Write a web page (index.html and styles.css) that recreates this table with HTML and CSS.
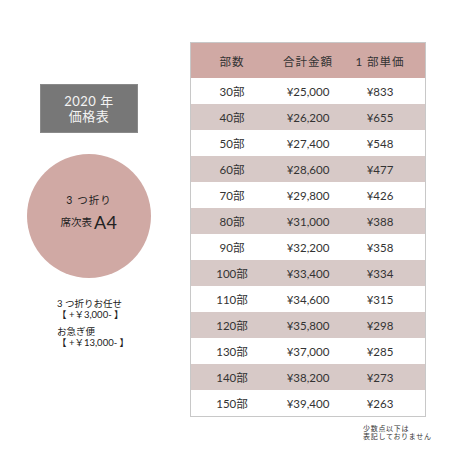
FILE: index.html
```html
<!DOCTYPE html>
<html lang="ja">
<head>
<meta charset="utf-8">
<link rel="stylesheet" href="styles.css">
</head>
<body>
<div class="page">
  <div class="left">
    <div class="yearbox">
      <div>2020 年</div>
      <div>価格表</div>
    </div>
    <div class="circle">
      <div class="c1">3 つ折り</div>
      <div class="c2">席次表 <span class="a4">A4</span></div>
    </div>
    <div class="notes">
      <div class="group">
        <div>3 つ折りお任せ</div>
        <div>【 +￥3,000- 】</div>
      </div>
      <div class="group">
        <div>お急ぎ便</div>
        <div>【 +￥13,000- 】</div>
      </div>
    </div>
  </div>
  <div class="right">
    <div class="table">
      <div class="row head"><span>部数</span><span>合計金額</span><span>1 部単価</span></div>
      <div class="row"><span>30部</span><span>¥25,000</span><span>¥833</span></div>
      <div class="row alt"><span>40部</span><span>¥26,200</span><span>¥655</span></div>
      <div class="row"><span>50部</span><span>¥27,400</span><span>¥548</span></div>
      <div class="row alt"><span>60部</span><span>¥28,600</span><span>¥477</span></div>
      <div class="row"><span>70部</span><span>¥29,800</span><span>¥426</span></div>
      <div class="row alt"><span>80部</span><span>¥31,000</span><span>¥388</span></div>
      <div class="row"><span>90部</span><span>¥32,200</span><span>¥358</span></div>
      <div class="row alt"><span>100部</span><span>¥33,400</span><span>¥334</span></div>
      <div class="row"><span>110部</span><span>¥34,600</span><span>¥315</span></div>
      <div class="row alt"><span>120部</span><span>¥35,800</span><span>¥298</span></div>
      <div class="row"><span>130部</span><span>¥37,000</span><span>¥285</span></div>
      <div class="row alt"><span>140部</span><span>¥38,200</span><span>¥273</span></div>
      <div class="row"><span>150部</span><span>¥39,400</span><span>¥263</span></div>
    </div>
    <div class="foot">
      <div>少数点以下は</div>
      <div>表記しておりません</div>
    </div>
  </div>
</div>
</body>
</html>
```

FILE: styles.css
```css
* { box-sizing: border-box; }
html, body {
  margin: 0;
  padding: 0;
  background: #ffffff;
}
body {
  width: 460px;
  height: 460px;
  overflow: hidden;
  font-family: "Lato", "Noto Sans CJK JP", sans-serif;
  color: #333;
}
.page {
  display: flex;
  width: 460px;
  height: 460px;
}
.left {
  width: 190px;
  padding-top: 84px;
  display: flex;
  flex-direction: column;
}
.yearbox {
  margin-left: 40px;
  width: 98px;
  height: 49px;
  background: #777777;
  border: 1px solid #8a8a8a;
  color: #f4f4f4;
  font-size: 13px;
  line-height: 15px;
  letter-spacing: 0.5px;
  display: flex;
  flex-direction: column;
  align-items: center;
  justify-content: center;
}
.circle {
  margin-top: 21px;
  margin-left: 27px;
  width: 124px;
  height: 124px;
  border-radius: 50%;
  background: #d0a9a4;
  display: flex;
  flex-direction: column;
  align-items: center;
  justify-content: center;
  color: #222;
  padding-bottom: 8px;
}
.c1 {
  font-size: 10.5px;
  letter-spacing: 1px;
  line-height: 14px;
}
.c2 {
  margin-top: 6px;
  font-size: 10.5px;
  line-height: 18px;
  display: flex;
  align-items: center;
  gap: 2px;
}
.a4 {
  font-size: 18px;
  letter-spacing: 0.5px;
  font-weight: 400;
}
.notes {
  margin-top: 21px;
  margin-left: 57px;
  font-size: 9.5px;
  line-height: 10.5px;
  color: #222;
}
.group + .group {
  margin-top: 7px;
}
.right {
  padding-top: 42px;
  display: flex;
  flex-direction: column;
}
.table {
  width: 236px;
  border: 1px solid #c8c8c8;
}
.row {
  display: grid;
  grid-template-columns: 82px 70px 74px;
  height: 26px;
  align-items: center;
  font-size: 11.5px;
  color: #333;
}
.row span {
  text-align: center;
}
.row.head {
  height: 35px;
  background: #d0a9a4;
  font-size: 11.5px;
  letter-spacing: 1px;
  color: #333;
}
.row.alt {
  background: #d7c9c7;
}
.foot {
  margin-top: 7px;
  margin-left: 173px;
  font-size: 7px;
  line-height: 8px;
  letter-spacing: 0.7px;
  color: #333;
}
```
